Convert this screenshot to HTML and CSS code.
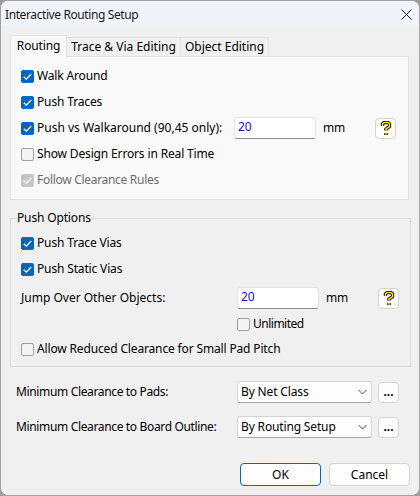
FILE: index.html
```html
<!DOCTYPE html>
<html lang="en">
<head>
  <meta charset="UTF-8" />
  <title>Interactive Routing Setup</title>
  <link rel="stylesheet" href="styles.css">
</head>
<body>
  <svg class="defs" width="0" height="0">
    <symbol id="help" viewBox="0 0 12 15">
      <path d="M2.5 5V3L4 1.5H8L9.5 3V5.5L6 8V9.5" fill="none" stroke="#000" stroke-width="3.4" />
      <path d="M6 12V14" fill="none" stroke="#000" stroke-width="3.4" />
      <path d="M2.5 5V3L4 1.5H8L9.5 3V5.5L6 8V9.5" fill="none" stroke="#ffee00" stroke-width="1.5" />
      <path d="M6 11.8V13.8" fill="none" stroke="#ffee00" stroke-width="1.5" />
    </symbol>
    <symbol id="tick" viewBox="0 0 13 13">
      <path d="M2.8 6.8L5.3 9.2L10.2 4" fill="none" stroke="#fff" stroke-width="1.3" />
    </symbol>
  </svg>

  <div class="window">
    <div class="titlebar">
      <span class="title">Interactive Routing Setup</span>
      <svg class="close" width="11" height="11" viewBox="0 0 11 11">
        <path d="M.5 .5L10.5 10.5M10.5 .5L.5 10.5" stroke="#1a1a1a" stroke-width="1" fill="none" />
      </svg>
    </div>

    <div class="tabs">
      <div class="tab active">Routing</div>
      <div class="tab tab-trace">Trace &amp; Via Editing</div>
      <div class="tab tab-object">Object Editing</div>
    </div>

    <section class="panel">
      <div class="row">
        <span class="check on"><svg width="13" height="13"><use href="#tick" /></svg></span>
        <label>Walk Around</label>
      </div>
      <div class="row">
        <span class="check on"><svg width="13" height="13"><use href="#tick" /></svg></span>
        <label>Push Traces</label>
      </div>
      <div class="row">
        <span class="check on"><svg width="13" height="13"><use href="#tick" /></svg></span>
        <label class="label-push">Push vs Walkaround (90,45 only):</label>
        <input class="num" type="text" value="20" />
        <span class="unit">mm</span>
        <button class="help"><svg width="12" height="15"><use href="#help" /></svg></button>
      </div>
      <div class="row">
        <span class="check"></span>
        <label>Show Design Errors in Real Time</label>
      </div>
      <div class="row disabled">
        <span class="check off"><svg width="13" height="13"><use href="#tick" /></svg></span>
        <label>Follow Clearance Rules</label>
      </div>
    </section>

    <fieldset class="group">
      <legend>Push Options</legend>
      <div class="row">
        <span class="check on"><svg width="13" height="13"><use href="#tick" /></svg></span>
        <label>Push Trace Vias</label>
      </div>
      <div class="row">
        <span class="check on"><svg width="13" height="13"><use href="#tick" /></svg></span>
        <label>Push Static Vias</label>
      </div>
      <div class="row row-jump">
        <label class="label-jump">Jump Over Other Objects:</label>
        <input class="num" type="text" value="20" />
        <span class="unit">mm</span>
        <button class="help"><svg width="12" height="15"><use href="#help" /></svg></button>
      </div>
      <div class="row row-unlimited">
        <span class="check"></span>
        <label>Unlimited</label>
      </div>
      <div class="row">
        <span class="check"></span>
        <label>Allow Reduced Clearance for Small Pad Pitch</label>
      </div>
    </fieldset>

    <div class="clearance">
      <div class="clearance-row">
        <label>Minimum Clearance to Pads:</label>
        <div class="select">
          <span>By Net Class</span>
          <svg width="9" height="6" viewBox="0 0 9 6"><path d="M.5 1L4.5 5L8.5 1" fill="none" stroke="#555" /></svg>
        </div>
        <button class="more">...</button>
      </div>
      <div class="clearance-row">
        <label>Minimum Clearance to Board Outline:</label>
        <div class="select">
          <span>By Routing Setup</span>
          <svg width="9" height="6" viewBox="0 0 9 6"><path d="M.5 1L4.5 5L8.5 1" fill="none" stroke="#555" /></svg>
        </div>
        <button class="more">...</button>
      </div>
    </div>

    <div class="actions">
      <button class="btn primary">OK</button>
      <button class="btn">Cancel</button>
    </div>
  </div>
</body>
</html>
```

FILE: styles.css
```css
* {
  box-sizing: border-box;
}

html, body {
  margin: 0;
  padding: 0;
  background: #9c9c9c;
}

body {
  font-family: "Noto Sans", "Open Sans", sans-serif;
  font-size: 12px;
  letter-spacing: -0.15px;
  color: #000;
  line-height: 16px;
}

.defs {
  position: absolute;
}

.window {
  width: 420px;
  height: 496px;
  background: #f0f0f0;
  border: 1px solid #a3a3a3;
  border-radius: 8px;
  overflow: hidden;
}

.titlebar {
  height: 25px;
  background: #f0f3f9;
  padding: 6px 0 0 4px;
  display: flex;
  justify-content: space-between;
  color: #1a1a1a;
}

.title {
  letter-spacing: -0.4px;
}

.close {
  margin: 2px 7px 0 0;
}

.tabs {
  display: flex;
  align-items: flex-end;
  height: 30px;
  padding: 0 0 0 9px;
}

.tab {
  height: 19px;
  margin-bottom: 0;
  background: #f0f0f0;
  border: 1px solid #e2e2e2;
  border-bottom: 0;
  border-left: 0;
  text-align: center;
  padding-top: 1px;
  letter-spacing: 0;
}

.tab.active {
  width: 57px;
  height: 22px;
  margin-bottom: -1px;
  background: #f9f9f9;
  border-left: 1px solid #e2e2e2;
  position: relative;
  z-index: 1;
  padding-top: 2px;
  letter-spacing: -0.15px;
}

.tab-trace {
  width: 114px;
}

.tab-object {
  width: 88px;
}

.panel {
  width: 399px;
  height: 144px;
  margin-left: 9px;
  padding: 6px 0 0 10px;
  background: #f9f9f9;
  border: 1px solid #e2e2e2;
}

.row {
  display: flex;
  align-items: center;
  height: 26px;
}

.check {
  flex: none;
  width: 13px;
  height: 13px;
  margin-right: 3px;
  background: #f4f4f4;
  border: 1px solid #a0a0a0;
  border-radius: 2px;
  display: flex;
}

.check svg {
  margin: -1px;
  flex: none;
}

.check.on {
  background: #0067c0;
  border-color: #0067c0;
}

.check.off {
  background: #c6c6c6;
  border-color: #c6c6c6;
}

.disabled {
  color: #6d6d6d;
  letter-spacing: -0.3px;
}

.label-push {
  width: 197px;
  letter-spacing: 0;
}

.label-jump {
  width: 216px;
  letter-spacing: 0;
}

.num {
  width: 82px;
  height: 22px;
  padding: 0 0 3px 3px;
  font: inherit;
  letter-spacing: 0;
  color: #1a0dc8;
  background: #fff;
  border: 1px solid #e4e4e4;
  border-bottom: 1px solid #8a8a8a;
  border-radius: 3px;
  outline: none;
}

.unit {
  width: 59px;
  padding-left: 7px;
}

.help, .more {
  flex: none;
  width: 21px;
  height: 21px;
  padding: 0;
  background: #fdfdfd;
  border: 1px solid #d4d4d4;
  border-radius: 4px;
  display: flex;
  align-items: center;
  justify-content: center;
  font: inherit;
}

.group {
  width: 401px;
  height: 157px;
  margin: 10px 0 0 9px;
  padding: 4px 0 0 10px;
  border: 1px solid #dcdcdc;
  min-width: 0;
}

.group legend {
  padding: 0;
  margin-left: -4px;
  line-height: 16px;
}

.row-jump {
  height: 30px;
  margin-top: 1px;
}

.row-unlimited {
  height: 20px;
  margin-top: 1px;
  padding-left: 216px;
  letter-spacing: -0.5px;
}

.row-unlimited + .row {
  margin-top: 2px;
}

.clearance {
  margin: 14px 0 0 15px;
}

.clearance-row {
  display: flex;
  align-items: center;
  height: 22px;
  margin-bottom: 13px;
}

.clearance-row label {
  width: 221px;
  letter-spacing: -0.35px;
}

.select {
  width: 135px;
  height: 22px;
  margin-right: 6px;
  padding: 0 4px 0 3px;
  background: #fdfdfd;
  border: 1px solid #d4d4d4;
  border-bottom-color: #a8a8a8;
  border-radius: 3px;
  display: flex;
  align-items: center;
  justify-content: space-between;
}

.more {
  font-weight: bold;
  line-height: 12px;
}

.actions {
  display: flex;
  gap: 8px;
  justify-content: flex-end;
  margin: 25px 9px 0 0;
}

.btn {
  width: 81px;
  height: 23px;
  padding: 0;
  font: inherit;
  color: #000;
  background: #fdfdfd;
  border: 1px solid #d4d4d4;
  border-radius: 4px;
}

.btn.primary {
  border: 1px solid #0067c0;
}
```
